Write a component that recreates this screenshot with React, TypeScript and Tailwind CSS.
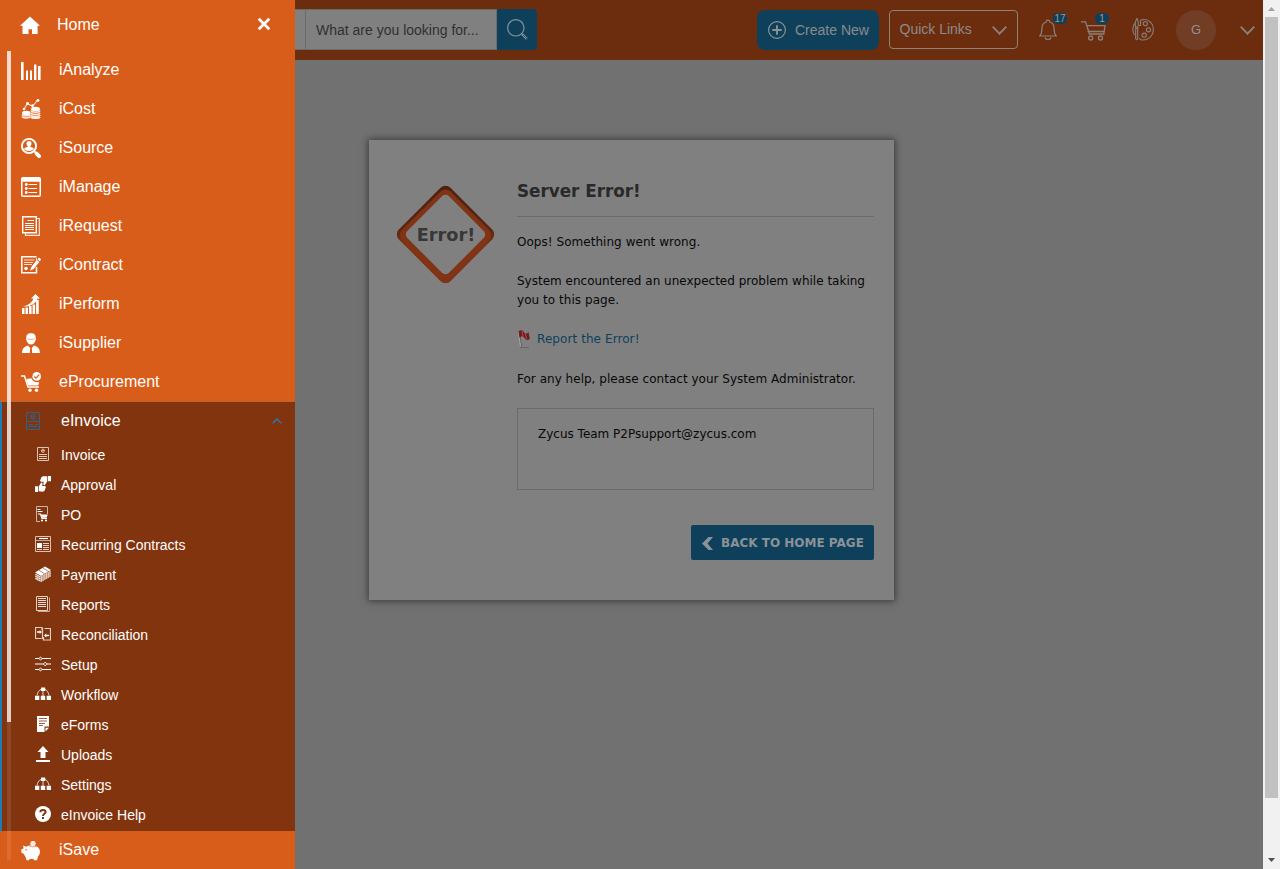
import React from "react";

type Item = { label: string; icon: React.ReactNode };

const Svg20 = ({ children }: { children: React.ReactNode }) => (
  <svg width="20" height="20" viewBox="0 0 20 20" fill="none" stroke="none" className="mt-px block shrink-0">
    {children}
  </svg>
);

const Svg16 = ({ children }: { children: React.ReactNode }) => (
  <svg width="16" height="16" viewBox="0 0 16 16" fill="none" stroke="none" className="mb-0.5 block shrink-0">
    {children}
  </svg>
);

const items: Item[] = [
  {
    label: "iAnalyze",
    icon: (
      <Svg20>
        <path fill="#fff" d="M0 2h2.600v18H0zM5 10.500h2V20H5zM9 10.500h2V20H9zM13 4.500h2.400V20H13zM17 6h2.600v14H17z" />
      </Svg20>
    ),
  },
  {
    label: "iCost",
    icon: (
      <Svg20>
        <path stroke="#ffe6d8" strokeWidth="1.100" d="M3 10 6.500 4.500 11.500 7.500 16.500 1" />
        <g fill="#fff">
          <circle cx="3" cy="10" r="1.300" />
          <circle cx="6.500" cy="4.500" r="1.400" />
          <circle cx="11.500" cy="6.500" r="1.300" />
          <circle cx="17" cy="1.400" r="1.400" />
          <ellipse cx="14.500" cy="10" rx="4.500" ry="2.300" />
          <ellipse cx="5.300" cy="14" rx="4.300" ry="2.300" />
        </g>
        <g stroke="#ffeee4" strokeWidth="1.600">
          <path d="M10 11.500c1 2.300 8 2.300 9 0M10 13.700c1 2.300 8 2.300 9 0M10 15.900c1 2.300 8 2.300 9 0M10 18c1 1.600 8 1.600 9 0M1 15.500c1 2 7 2 8.500 0M1 17.500c1 2 7 2 8.500 0" />
        </g>
      </Svg20>
    ),
  },
  {
    label: "iSource",
    icon: (
      <Svg20>
        <circle cx="8" cy="8" r="7.100" stroke="#fff" strokeWidth="1.900" />
        <path stroke="#fff" strokeWidth="3.800" strokeLinecap="round" d="m15.600 15.600 2.500 2.500" />
        <path stroke="#fff" strokeWidth="1.800" d="m12.800 12.800 2 2" />
        <circle cx="8" cy="5.500" r="2.500" fill="#fff" />
        <path fill="#fff" d="M6.600 7h2.800v2c2 .3 3.300.8 3.500 2-2 2.500-7.800 2.500-9.800 0 .2-1.200 1.500-1.700 3.500-2z" />
      </Svg20>
    ),
  },
  {
    label: "iManage",
    icon: (
      <Svg20>
        <path fill="#fff" fillRule="evenodd" d="M2 0h16a2 2 0 0 1 2 2v16a2 2 0 0 1-2 2H2a2 2 0 0 1-2-2V2a2 2 0 0 1 2-2zM1.500 4.800v13.700h17V4.800z" />
        <path stroke="#fff" strokeWidth="1.200" d="M7.500 7.500H16M7.500 11.500H16M7.500 15.500H16" />
        <path stroke="#fff" strokeWidth="2.800" strokeLinecap="round" d="M5.200 7.500h.1M5.200 11.500h.1M5.200 15.500h.1" />
      </Svg20>
    ),
  },
  {
    label: "iRequest",
    icon: (
      <Svg20>
        <path stroke="#fff" strokeWidth="1.400" d="M1.700.7h13.600v16H1.700z" />
        <path stroke="#ffe6d8" strokeWidth="1.200" d="M16 2.500h2.300v16.900H4.500v-2.500" />
        <path stroke="#fff" strokeWidth="1.200" d="M6.500 4.500h6.500M4 7.500h9M4 9.500h9M4 11.500h9M4 13.500h9" />
      </Svg20>
    ),
  },
  {
    label: "iContract",
    icon: (
      <Svg20>
        <path stroke="#fff" strokeWidth="1.500" d="M15.500 1.800H.8v16h14.700V12" />
        <path stroke="#ffe0cf" strokeWidth="1.100" d="M15.500 3V5M3 5h10.500M3 7.500h9M3 9.500h8" />
        <circle cx="5" cy="13.500" r="1.800" fill="#fff" />
        <path fill="#fff" d="m18 2.500 2.200 2L18.700 6.200l-2.200-2zM15.800 4.800l2.500 2.300-5.600 7-3.700 1.700 1.500-4z" />
      </Svg20>
    ),
  },
  {
    label: "iPerform",
    icon: (
      <Svg20>
        <path fill="#fff" d="M1 14h2.500v6H1zM4.500 13.500H7V20H4.500zM8 12h2.600v8H8zM11.600 10.500h2.500V20h-2.500zM15.100 6h2.600v14h-2.600z" />
        <path fill="#fff" d="M1 12.700c5-.5 9.500-3.500 11.500-8.200H10L14.500 0 19 4.500h-2.300C14.500 10 9 13 1 12.700z" />
      </Svg20>
    ),
  },
  {
    label: "iSupplier",
    icon: (
      <Svg20>
        <path fill="#fff" d="M5.300 5.500C5 1.500 7 .2 10 .2s5 1.300 4.700 5.300c.5 0 .5 1 0 1.500-1 3-2.500 4.500-4.700 4.500S6.300 10 5.300 7c-.5-.5-.5-1.500 0-1.500zM1 20c.3-4.500 2-6.500 6-7.500l2.200 2.500-.4 5zM19 20c-.3-4.500-2-6.500-6-7.500L10.800 15l.4 5z" />
        <path stroke="#d85c1a" strokeWidth=".5" d="M6.500 5.700c2 1 5 1 7 0" />
      </Svg20>
    ),
  },
  {
    label: "eProcurement",
    icon: (
      <Svg20>
        <path stroke="#fff" strokeWidth="1.500" d="M0 4h3.500L7 15h11" />
        <path fill="#fff" d="m5.200 7 5.300-.7c1 3 4 4.500 7.700 3.700L17.300 13.500H7.300z" />
        <circle cx="15.700" cy="4.400" r="4.300" fill="#fff" />
        <path stroke="#d85c1a" strokeWidth="1.200" d="m13.300 4.500 1.700 1.700 3.200-3.500" />
        <circle cx="9" cy="18.200" r="1.700" fill="#fff" />
        <circle cx="15.500" cy="18.200" r="1.700" fill="#fff" />
      </Svg20>
    ),
  },
];

const workflow = (
  <Svg16>
    <path stroke="#e8d8cf" strokeWidth="1" d="M6 3.500C4 4 2.500 6.500 2 9.500M10 3.500c2 .5 3.500 3 4 6M8 4v7" />
    <path fill="#fff" d="M6 1.500h4.200v3.500H6zM0 9.700h4.300V14H0zM5.800 9.700h4.400V14H5.800zM11.700 9.700H16V14h-4.300z" />
  </Svg16>
);

const subItems: Item[] = [
  {
    label: "Invoice",
    icon: (
      <Svg16>
        <path stroke="#d8c2b7" strokeWidth="1" d="M2.500 1.500h11v13h-11z" />
        <path stroke="#e9dcd5" strokeWidth=".9" d="M6.500 4.700h3c0-2-3-2-3 0s2 1.800 3 1M4 8.500h8M4 10.500h8M4 12.500h8" />
      </Svg16>
    ),
  },
  {
    label: "Approval",
    icon: (
      <Svg16>
        <path fill="#fff" d="M13 0h3v5.200h-3zM12.300.3v5l-2.600 4c-1.500.2-1.600-.9-1-3.500H6c-1-.5-1-1.300-.6-2L6.500.9 8.200.2zM0 10.300h3V16H0zM3.700 10.500l2.500-3.900c1.500-.1 1.600 1 1 3.500h2.800c1 .5 1 1.300.6 2l-1.200 3-1.700.6-4-.4z" />
      </Svg16>
    ),
  },
  {
    label: "PO",
    icon: (
      <Svg16>
        <path stroke="#cdb3a6" d="M1.500.5h11V8M1.500.5v15H5" />
        <path stroke="#fff" strokeWidth="1.200" d="M2.500 3.500h3M2.500 5.500h5M3 8h2.500L7 12.500h5" />
        <path fill="#fff" d="M5.500 8.500h7.300l-1.300 3.200H6.700z" />
        <circle cx="7" cy="14.500" r="1.100" fill="#fff" />
        <circle cx="11" cy="14.500" r="1.100" fill="#fff" />
      </Svg16>
    ),
  },
  {
    label: "Recurring Contracts",
    icon: (
      <Svg16>
        <path stroke="#d8c2b7" d="M.5.5h15v15H.5z" />
        <path stroke="#fff" strokeWidth="1.200" d="M4 2.500h9" />
        <path stroke="#c6a998" d="M1 4.500h14" />
        <path fill="#fff" d="M2 7h5v5H2z" />
        <path stroke="#e3d1c7" d="M8 7.500h6M8 9.500h6M8 11.500h6M2 13.500h5M8 13.500h6" />
      </Svg16>
    ),
  },
  {
    label: "Payment",
    icon: (
      <Svg16>
        <path fill="#fff" d="m0 6.500 10-6L16 4l-10 6z" />
        <path stroke="#f7eee9" strokeWidth="1.500" strokeDasharray="1.600 .4" d="m.4 8.300 5.600 3 9.700-5.700M.4 10.300l5.600 3 9.700-5.700M.4 12.300l5.600 3 9.700-5.700" />
        <path stroke="#82340f" strokeWidth=".6" d="m4 4.300 5.500 3.500M8 2l5.500 3.500" />
      </Svg16>
    ),
  },
  {
    label: "Reports",
    icon: (
      <Svg16>
        <path stroke="#e3d1c7" d="M1.500.5h11v14h-11z" />
        <path stroke="#c6a998" d="M14.500 1.500v14H3" />
        <path stroke="#e9dcd5" d="M3 2.500h8M3 4.500h8M3 6.500h8M3 8.500h8M3 10.500h8" />
      </Svg16>
    ),
  },
  {
    label: "Reconciliation",
    icon: (
      <Svg16>
        <path stroke="#e3d1c7" strokeWidth="1.200" d="M6.500 12.500h-6v-11h6.500V4M9.500 2.500h6v11.500h-7v-3M7.500 2v11" />
        <path stroke="#fff" strokeWidth="1.400" d="M2 6h3.500M10.500 9.500H14" />
        <path fill="#fff" d="m4.700 4 2.300 2-2.300 2zM11.300 7.500 9 9.500l2.300 2z" />
      </Svg16>
    ),
  },
  {
    label: "Setup",
    icon: (
      <Svg16>
        <path stroke="#fff" strokeWidth="1.100" d="M0 2.500h4M7 2.500h9M0 8h8.500M12 8h4M0 13.500h4M7 13.500h9" />
        <path stroke="#fff" d="M5.500 1.200a1.300 1.300 0 1 0 .01 0M10.200 6.500a1.500 1.500 0 1 0 .01 0M5.500 12.200a1.300 1.300 0 1 0 .01 0" />
      </Svg16>
    ),
  },
  { label: "Workflow", icon: workflow },
  {
    label: "eForms",
    icon: (
      <Svg16>
        <path fill="#fff" d="M2 0h12v10.500H9.500V16H2zM10.500 11.700H14L10.500 15.500z" />
        <path stroke="#82340f" strokeWidth=".8" d="M4 2.500h8M4 5h8M4 7.500h6M4 9.500h4" />
      </Svg16>
    ),
  },
  {
    label: "Uploads",
    icon: (
      <Svg16>
        <path fill="#fff" d="M8 0l5.500 6h-3v6h-5V6h-3zM1 14h14v2H1z" />
      </Svg16>
    ),
  },
  { label: "Settings", icon: workflow },
  {
    label: "eInvoice Help",
    icon: (
      <Svg16>
        <circle cx="8" cy="8" r="8" fill="#fff" />
        <path stroke="#82340f" strokeWidth="2" d="M5.300 6.200C5.400 4.600 6.500 4 8 4s2.600.8 2.600 2.100C10.600 7.800 8 7.700 8 10" />
        <path fill="#82340f" d="M7 11h2v2H7z" />
      </Svg16>
    ),
  },
];

function Sidebar() {
  return (
    <nav className="relative flex h-full w-[295px] shrink-0 flex-col bg-[#d85c1a] text-base text-white">
      <div className="flex h-[50px] shrink-0 items-start pl-5 pr-[24px]">
        <svg width="20" height="18" viewBox="0 0 20 18" className="mt-4 shrink-0" fill="#fff">
          <path d="M10 .5 20 9.700h-2.400V18H12v-4.800H8.500V18H2.500V9.700H0z" />
        </svg>
        <span className="ml-[17px] mt-[13px] leading-6">Home</span>
        <svg width="14" height="14" viewBox="0 0 14 14" className="ml-auto mt-[17px]" stroke="#fff" strokeWidth="2.700">
          <path d="m1.700 1.700 10.600 10.600M12.300 1.700 1.700 12.300" />
        </svg>
      </div>
      <ul className="shrink-0">
        {items.map((it) => (
          <li key={it.label} className="flex h-[39px] items-center pl-[21px]">
            {it.icon}
            <span className="ml-[18px]">{it.label}</span>
          </li>
        ))}
      </ul>
      <div className="h-px shrink-0 border-t border-dotted border-[#9c6a4a]" />
      <div className="h-[429px] shrink-0 border-l-2 border-l-[#1c7cb5] bg-[#82340f]">
        <div className="flex h-[38px] items-center pl-6 pr-[13px]">
          <svg width="14" height="18" viewBox="0 0 14 18" className="shrink-0" fill="none" stroke="#2b6388">
            <path d="M.5.500h13v17H.500zM1 9.500h12M2.500 12.500h5M9 12.500h3M2.500 14.500h9" />
            <path strokeWidth="1.100" d="M5 4.700h4.200c0-3-4.200-3-4.200 0 0 2.500 3 2.600 4 1.400" />
          </svg>
          <span className="ml-[21px]">eInvoice</span>
          <svg width="10" height="6" viewBox="0 0 10 6" className="mb-px ml-auto" fill="none" stroke="#1f80b5" strokeWidth="1.300">
            <path d="M.7 5.300 5 1l4.300 4.300" />
          </svg>
        </div>
        <ul>
          {subItems.map((it) => (
            <li key={it.label} className="flex h-[30px] items-center pl-[33px] text-sm">
              {it.icon}
              <span className="ml-[10px]">{it.label}</span>
            </li>
          ))}
        </ul>
      </div>
      <div className="flex h-[38px] shrink-0 items-center pl-[21px]">
        <Svg20>
          <path fill="#fff" d="M.3 8.500 2.500 7.500 2.200 4.500l3 1.300C8 4 17 3.500 18.700 9c.8 2.500-.2 5-1.700 6.500L16 19.200h-3l-.5-1.300H8.700l-.7 1.300H5.500l-.8-3L2.800 13 .3 11.500z" />
          <circle cx="12" cy="2.600" r="2.700" fill="#ffede3" />
          <path stroke="#d85c1a" strokeWidth=".6" d="M8.500 5.300c2 .7 5 .7 7 0" />
          <circle cx="5" cy="8.700" r=".8" fill="#d85c1a" />
        </Svg20>
        <span className="ml-[18px]">iSave</span>
      </div>
      <div className="absolute left-[7px] top-[51px] h-[809px] w-1 bg-white/10">
        <div className="h-[671px] bg-white/75" />
      </div>
    </nav>
  );
}

function Header() {
  return (
    <header className="flex h-[60px] items-start bg-[#6c2d0f] text-[#8b8b8b]">
      <div className="mt-[9px] h-[41px] w-[10px] border-y border-[#6c6c6c] bg-[#808080]" />
      <div className="mt-[9px] flex h-[41px] w-[192px] items-center border border-[#6c6c6c] bg-[#808080] pl-[10px] pt-px text-sm text-[#303030]">
        What are you looking for...
      </div>
      <div className="mt-[9px] flex h-[41px] w-10 items-center justify-center rounded-r bg-[#0e405b]">
        <svg width="21" height="21" viewBox="0 0 21 21" fill="none" stroke="#8a9298" className="ml-px">
          <circle cx="8.800" cy="8.800" r="8.200" strokeWidth="1.200" />
          <path strokeWidth="2.400" d="m15 15 4.800 4.800" />
          <path stroke="#0e405b" strokeWidth=".7" d="m16 16 5 5" />
        </svg>
      </div>
      <div className="ml-[220px] mt-[10px] flex h-10 w-[122px] items-center rounded-lg bg-[#0e405b] pl-[11px] text-sm">
        <svg width="18" height="18" viewBox="0 0 18 18" fill="none" stroke="#8a9298">
          <circle cx="9" cy="9" r="8.400" strokeWidth="1.200" />
          <path strokeWidth="1.900" d="M4.300 9h9.400M9 4.300v9.400" />
        </svg>
        <span className="ml-[9px] whitespace-nowrap">Create New</span>
      </div>
      <div className="ml-[10px] mt-[10px] flex h-[39px] w-[129px] items-center justify-between rounded border border-[#8d8279] pl-[9.500px] pr-[10px]">
        <span className="mb-0.5 text-sm">Quick Links</span>
        <svg width="15" height="9" viewBox="0 0 15 9" className="mt-0.5" fill="none" stroke="#8b847e" strokeWidth="1.700">
          <path d="m.7.700 6.800 7 6.800-7" />
        </svg>
      </div>
      <div className="relative ml-[21px] mt-[19px]">
        <svg width="18" height="22" viewBox="0 0 18 22" fill="none" stroke="#8b8079" strokeWidth="1.200">
          <path d="M7.200 3c0-2.400 3.600-2.400 3.600 0 3 .8 4.200 3.200 4.200 6.200 0 4 .5 5.800 2.300 7.800H.700C2.500 15 3 13.200 3 9.200 3 6.200 4.200 3.800 7.200 3zM6 18.500c.8 2.800 5.200 2.800 6 0" />
        </svg>
        <span className="absolute -top-[6px] left-[14px] flex h-[11px] w-[14px] items-center justify-center rounded-[5px] bg-[#0e405b] text-[10px] leading-none text-[#9a9a9a]">17</span>
      </div>
      <div className="relative ml-6 mt-[21px]">
        <svg width="25" height="20" viewBox="0 0 25 20" fill="none" stroke="#8b8079" strokeWidth="1.300">
          <path d="M0 .8h4.500L8.500 13h14.300L24 4.700H5.800M6.500 10.500h16.800" />
          <circle cx="9.700" cy="17" r="2" />
          <circle cx="19.500" cy="17" r="2" />
        </svg>
        <span className="absolute -top-2 left-[14px] flex h-[11px] w-[14px] items-center justify-center rounded-[5px] bg-[#0e405b] text-[10px] leading-none text-[#9a9a9a]">1</span>
      </div>
      <svg width="22" height="23" viewBox="0 0 22 23" className="ml-[26px] mt-[18px]" fill="none" stroke="#8b8079" strokeWidth="1.100">
        <path d="M7 7.500h1.500V2.300C15-.2 21 4 21.300 11c.2 7-5.500 11.500-11.500 11-2 0-2-.7-2.500-2M3.300 5C.3 8 0 13 2.500 17" />
        <path d="M4.700.8c-2 4-2 6-1 8.200h2c1.200-2.200 1-4-.3-8.200zM3.700 9v11.500c.5 1.700 1.700 1.700 2 0V9M3.500 10.500H6" />
        <circle cx="13.300" cy="5.600" r="2.100" />
        <circle cx="16.500" cy="11.800" r="2.100" />
        <circle cx="12.200" cy="17.200" r="2.100" />
      </svg>
      <div className="ml-[22px] mt-[10px] flex size-10 items-center justify-center rounded-full bg-[#713d25] text-[13px] text-[#929292]">G</div>
      <svg width="15" height="9" viewBox="0 0 15 9" className="ml-6 mt-[26px]" fill="none" stroke="#8b847e" strokeWidth="1.700">
        <path d="m.7.700 6.800 7 6.800-7" />
      </svg>
    </header>
  );
}

function ErrorCard() {
  return (
    <section className="ml-[74px] mt-20 flex h-[460px] w-[525px] bg-[#808080] pl-7 pr-5 font-['DejaVu_Sans',sans-serif] text-[12px] text-[#080808] shadow-[0_0_7px_1px_rgba(0,0,0,0.5)]">
      <svg width="98" height="99" viewBox="0 0 98 99" className="mt-[45px] shrink-0">
        <defs>
          <linearGradient id="edge" x1="0" y1="0" x2="1" y2="1">
            <stop offset="0" stopColor="#4c2111" />
            <stop offset=".45" stopColor="#5a2611" />
            <stop offset=".6" stopColor="#803315" />
          </linearGradient>
        </defs>
        <rect x="12" y="13" width="73" height="73" rx="7" transform="rotate(45 48.500 49.500)" fill="url(#edge)" />
        <rect x="14.200" y="15.700" width="68.600" height="68.600" rx="7" transform="rotate(45 48.500 50)" fill="#803315" />
        <rect x="19" y="20" width="59" height="59" rx="5" transform="rotate(45 48.500 49.500)" fill="#808080" />
        <text x="49" y="56" textAnchor="middle" fontSize="17.500" fontWeight="bold" fill="#373737" textLength="58.500" lengthAdjust="spacingAndGlyphs">
          Error!
        </text>
      </svg>
      <div className="ml-[22px] w-[357px]">
        <h1 className="mt-[39px] h-[38px] border-b border-[#6b6b6b] text-[16.800px] leading-[25px] font-bold text-[#292929]">Server Error!</h1>
        <p className="mt-4 leading-[19px] tracking-[0.040px]">Oops! Something went wrong.</p>
        <p className="mt-5 leading-[19px] whitespace-nowrap">
          System encountered an unexpected problem while taking
          <br />
          <span className="tracking-[0.050px]">you to this page.</span>
        </p>
        <div className="mt-5 flex leading-[19px] tracking-[0.080px] text-[#0d405c]">
          <svg width="14" height="18" viewBox="0 0 14 18" className="mr-1.5" fill="none">
            <path stroke="#666" d="M3 17.500h9" />
            <path stroke="#555" d="m2.500 2.500 1.800 14" />
            <path stroke="#a0a0a0" strokeWidth="1.200" d="m1.500 2 2 14.500" />
            <path fill="#79191d" d="M1.500 1.500C4-.5 6 0 7.500 3c1.500 1.500 2.500.5 4-1l1.300 7C10 11 8.500 9.500 7.500 8 6 5.500 4.500 6 2.500 8z" />
            <path stroke="#9a5456" d="m5 1 1 5M8.500 4l1 5" />
          </svg>
          Report the Error!
        </div>
        <p className="mt-[21px] leading-[19px] tracking-[0.020px] whitespace-nowrap">For any help, please contact your System Administrator.</p>
        <div className="mt-[19px] h-[82px] border border-[#6b6b6b] pl-5 pt-4 leading-[19px]">Zycus Team P2Psupport@zycus.com</div>
        <div className="mt-[35px] flex justify-end">
          <button className="flex h-[35px] w-[183px] items-center rounded-[2px] bg-[#0e405b] pl-[11px] text-[12px] font-bold text-[#8a9298]">
            <svg width="11" height="13" viewBox="0 0 11 13" fill="#8a9298" className="mt-0.5 shrink-0">
              <path d="M6.500 0H11L5.500 6.500 11 13H6.500L0 6.500z" />
            </svg>
            <span className="ml-2 whitespace-nowrap">BACK TO HOME PAGE</span>
          </button>
        </div>
      </div>
    </section>
  );
}

export default function App() {
  return (
    <div className="flex h-[869px] w-[1280px] overflow-hidden bg-[#717171] font-['Liberation_Sans',Arial,sans-serif]">
      <Sidebar />
      <main className="w-[968px] shrink-0">
        <Header />
        <ErrorCard />
      </main>
      <div className="flex w-[17px] shrink-0 flex-col items-center bg-[#f1f1f1]">
        <svg width="17" height="17" viewBox="0 0 17 17">
          <path fill="#a3a3a3" d="M8.500 7 12 11H5z" />
        </svg>
        <div className="h-[781px] w-[13px] bg-[#c1c1c1]" />
        <svg width="17" height="17" viewBox="0 0 17 17" className="mt-auto">
          <path fill="#505050" d="M5 6h7l-3.500 4z" />
        </svg>
      </div>
    </div>
  );
}
